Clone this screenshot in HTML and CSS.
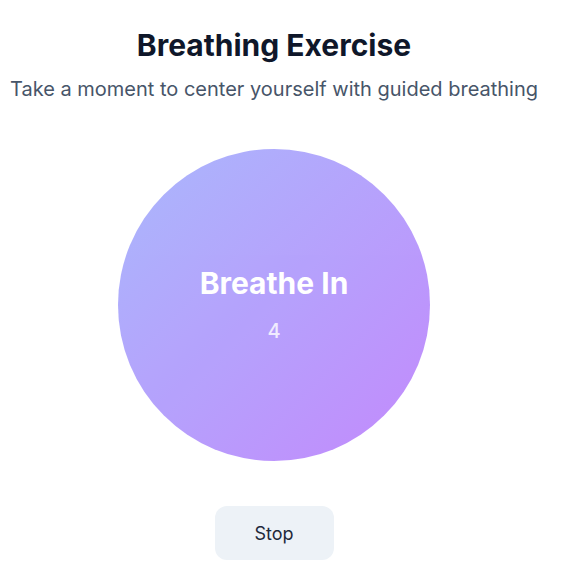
FILE: index.html
```html
<!DOCTYPE html>
<html lang="en">
<head>
<meta charset="utf-8">
<title>Breathing Exercise</title>
<link rel="stylesheet" href="styles.css">
</head>
<body>
<main class="page">
  <h1 class="title">Breathing Exercise</h1>
  <p class="subtitle">Take a moment to center yourself with guided breathing</p>
  <div class="stage">
    <div class="circle">
      <div class="phase">Breathe In</div>
      <div class="count">4</div>
    </div>
  </div>
  <button class="btn" type="button">Stop</button>
</main>
</body>
</html>
```

FILE: styles.css
```css
* { box-sizing: border-box; }
html, body { margin: 0; padding: 0; background: #ffffff; }
body {
  font-family: Inter, "Noto Sans", "Liberation Sans", sans-serif;
  color: #0f172a;
}
.page {
  width: 532px;
  margin-left: 8px;
  padding-top: 27px;
  display: flex;
  flex-direction: column;
  align-items: center;
}
.title {
  margin: 0;
  font-size: 30px;
  line-height: 36px;
  font-weight: 700;
  color: #0f172a;
}
.subtitle {
  margin: 12px 0 0;
  font-size: 20px;
  line-height: 28px;
  color: #475569;
  white-space: nowrap;
}
.stage {
  margin-top: 46px;
  width: 312px;
  height: 312px;
}
.circle {
  width: 312px;
  height: 312px;
  border-radius: 50%;
  background: linear-gradient(135deg, #a5b4fc 0%, #c084fc 100%);
  opacity: 0.95;
  display: flex;
  flex-direction: column;
  align-items: center;
  justify-content: center;
  color: #ffffff;
}
.phase {
  font-size: 30px;
  line-height: 36px;
  font-weight: 700;
}
.count {
  margin-top: 16px;
  font-size: 20px;
  line-height: 28px;
  font-weight: 500;
  opacity: 0.8;
}
.btn {
  margin-top: 45px;
  width: 119px;
  height: 54px;
  border: none;
  border-radius: 12px;
  background: #edf2f7;
  color: #1e293b;
  font-family: inherit;
  font-size: 18px;
  font-weight: 400;
}
```
